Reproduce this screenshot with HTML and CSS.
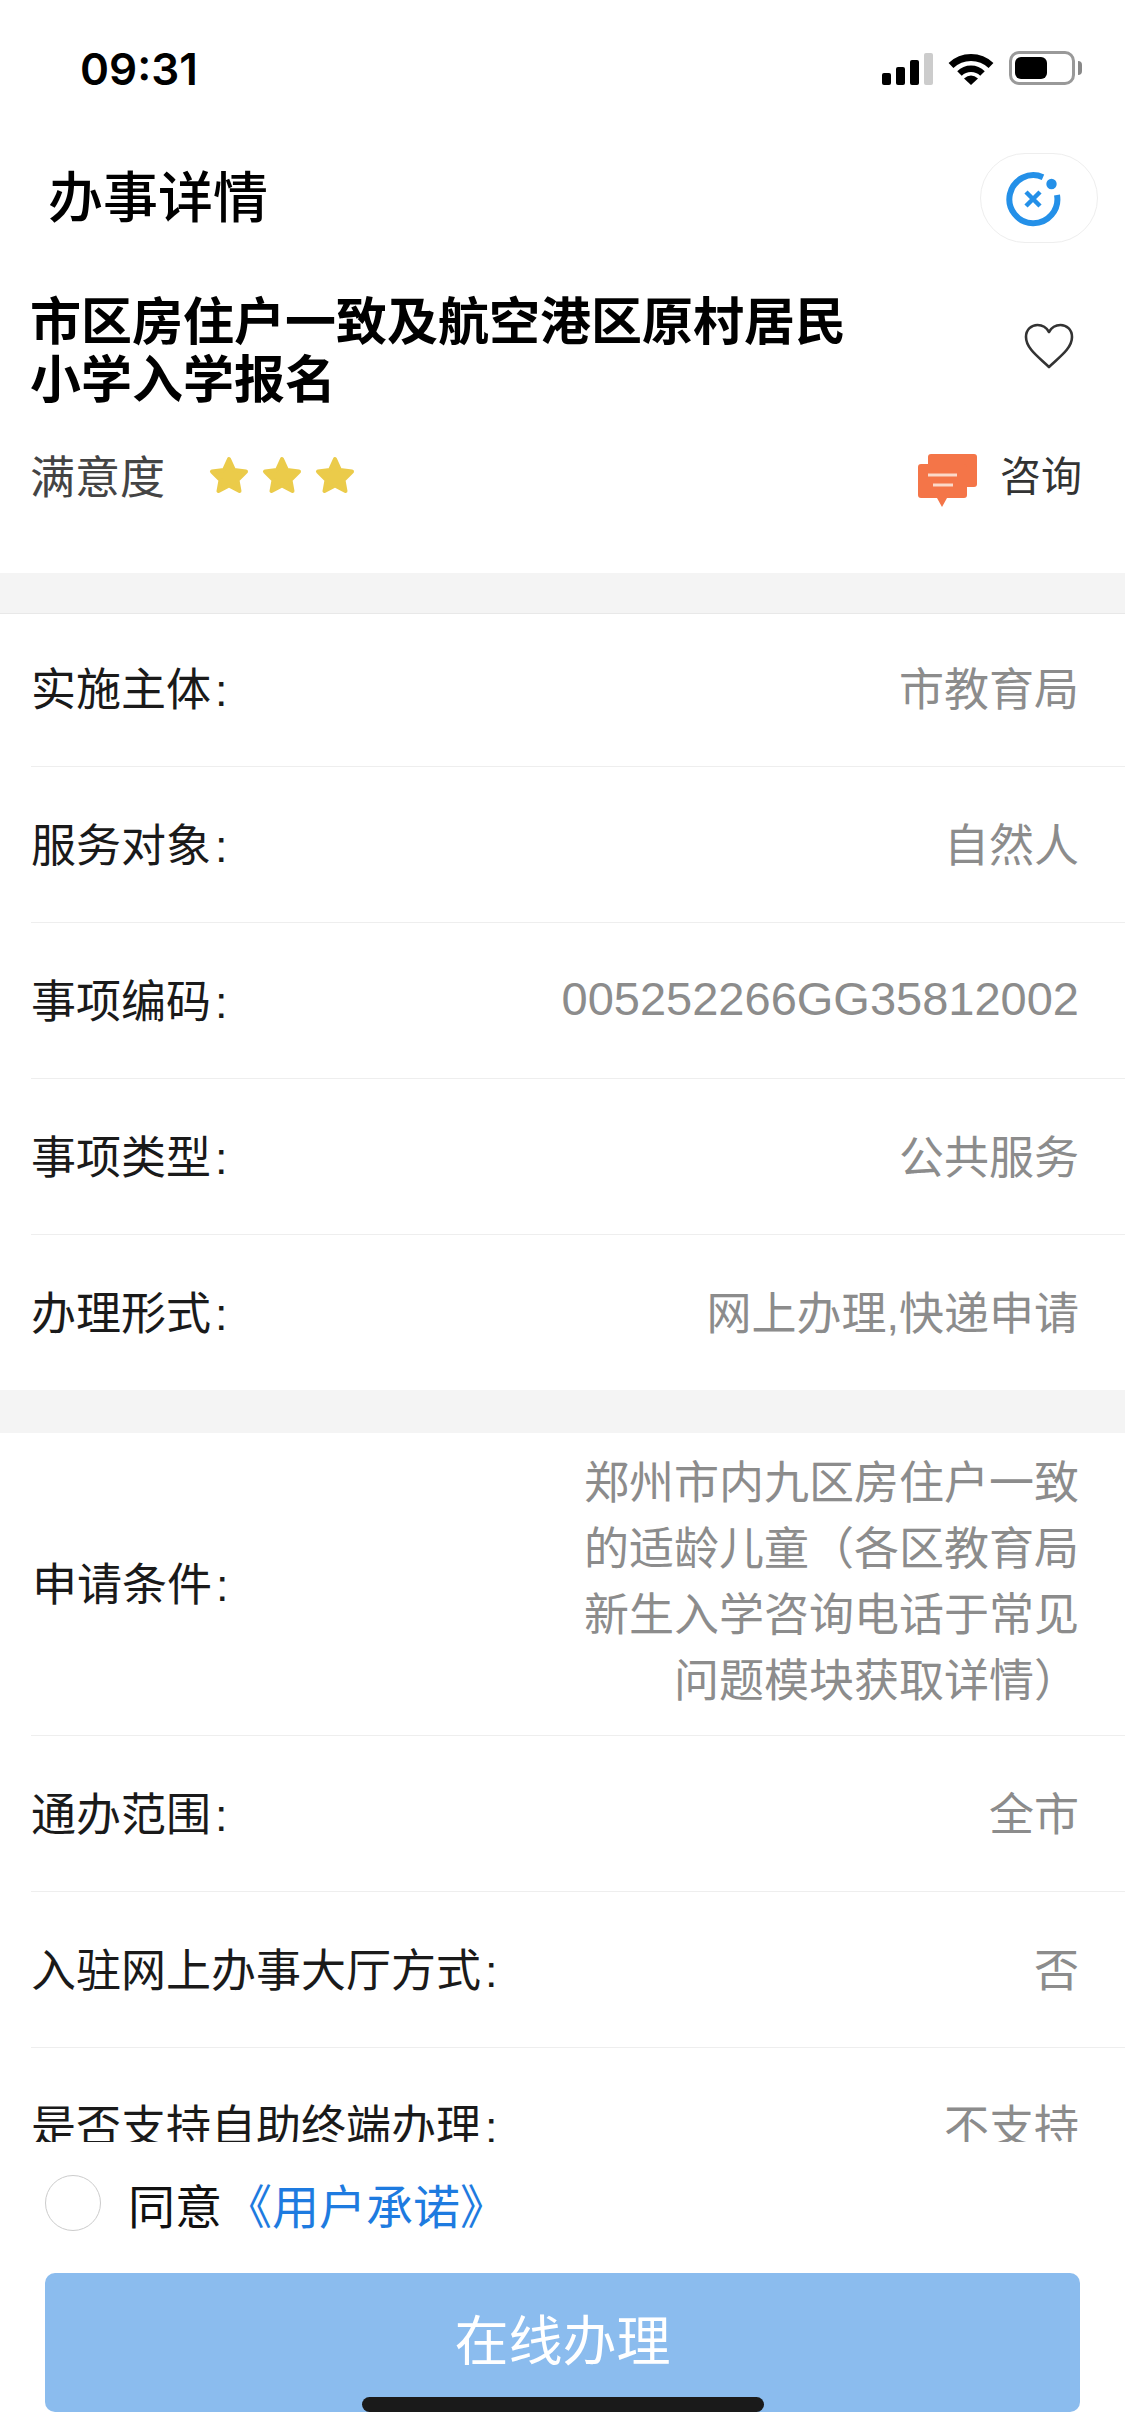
FILE: index.html
```html
<!DOCTYPE html>
<html lang="zh">
<head>
<meta charset="utf-8" />
<title>办事详情</title>
<link rel="stylesheet" href="styles.css">
</head>
<body>
<div class="page">
  <div class="status-bar">
    <span class="time">09:31</span>
    <div class="status-icons">
      <div class="signal">
        <i class="bar bar1"></i><i class="bar bar2"></i><i class="bar bar3"></i><i class="bar bar4"></i>
      </div>
      <svg class="wifi" width="46" height="33" viewBox="0 0 46 33">
        <path d="M3 13.5A29 29 0 0 1 43 13.5" fill="none" stroke="#000" stroke-width="7"/>
        <path d="M11.5 21.5A16.5 16.5 0 0 1 34.5 21.5" fill="none" stroke="#000" stroke-width="6.5"/>
        <path d="M16 26.5Q23 20.5 30 26.5L23 33Z" fill="#000"/>
      </svg>
      <div class="battery"><div class="battery-fill"></div></div>
      <div class="battery-nub"></div>
    </div>
  </div>

  <div class="nav">
    <span class="nav-title">办事详情</span>
    <div class="capsule">
      <svg class="capsule-icon" width="56" height="56" viewBox="0 0 56 56">
        <path d="M38 6.2A24 24 0 1 0 52 24" fill="none" stroke="#2490e8" stroke-width="6"/>
        <circle cx="46.5" cy="13" r="5.2" fill="#2490e8"/>
        <path d="M21 21L35 35M35 21L21 35" stroke="#2490e8" stroke-width="4.5"/>
      </svg>
    </div>
  </div>

  <div class="scroll">
    <div class="head">
      <div class="head-top">
        <h1 class="head-title">市区房住户一致及航空港区原村居民小学入学报名</h1>
        <svg class="heart" width="50" height="46" viewBox="0 0 50 46">
          <path d="M25 44C16 35 2 26 2 14C2 6.5 7.5 2 13.5 2C18.5 2 22.5 4.5 25 9C27.5 4.5 31.5 2 36.5 2C42.5 2 48 6.5 48 14C48 26 34 35 25 44Z" fill="none" stroke="#333" stroke-width="2.6" stroke-linejoin="round"/>
        </svg>
      </div>
      <div class="head-meta">
        <div class="rate">
          <span class="rate-label">满意度</span>
          <div class="stars">
            <svg width="40" height="38" viewBox="0 0 40 38"><path d="M20 3L25 14L37 15.5L28.5 24L30.5 35L20 29.5L9.5 35L11.5 24L3 15.5L15 14Z" fill="#ebcb4a" stroke="#ebcb4a" stroke-width="4" stroke-linejoin="round"/></svg>
            <svg width="40" height="38" viewBox="0 0 40 38"><path d="M20 3L25 14L37 15.5L28.5 24L30.5 35L20 29.5L9.5 35L11.5 24L3 15.5L15 14Z" fill="#ebcb4a" stroke="#ebcb4a" stroke-width="4" stroke-linejoin="round"/></svg>
            <svg width="40" height="38" viewBox="0 0 40 38"><path d="M20 3L25 14L37 15.5L28.5 24L30.5 35L20 29.5L9.5 35L11.5 24L3 15.5L15 14Z" fill="#ebcb4a" stroke="#ebcb4a" stroke-width="4" stroke-linejoin="round"/></svg>
          </div>
        </div>
        <div class="consult">
          <svg class="consult-icon" width="60" height="54" viewBox="0 0 60 54">
            <path d="M10 3Q10 0 13 0H56Q59 0 59 3V30Q59 33 56 33H10Z" fill="#f47548"/>
            <path d="M0 13Q0 10 3 10H46Q49 10 49 13V41Q49 44 46 44H29L24 53L19 44H3Q0 44 0 41Z" fill="#f47548"/>
            <path d="M10 21H39" stroke="#fbd9c9" stroke-width="3"/>
            <path d="M15 31H35" stroke="#fbd9c9" stroke-width="3"/>
          </svg>
          <span class="consult-text">咨询</span>
        </div>
      </div>
    </div>

    <div class="gap gap-first"></div>
    <div class="list">
      <div class="row row-first"><span class="row-label">实施主体<span class="colon">:</span></span><span class="row-value">市教育局</span></div>
      <div class="row"><span class="row-label">服务对象<span class="colon">:</span></span><span class="row-value">自然人</span></div>
      <div class="row"><span class="row-label">事项编码<span class="colon">:</span></span><span class="row-value row-code">005252266GG35812002</span></div>
      <div class="row"><span class="row-label">事项类型<span class="colon">:</span></span><span class="row-value">公共服务</span></div>
      <div class="row row-end"><span class="row-label">办理形式<span class="colon">:</span></span><span class="row-value">网上办理,快递申请</span></div>
    </div>
    <div class="gap"></div>
    <div class="list">
      <div class="row row-tall"><span class="row-label row-label-tall">申请条件<span class="colon">:</span></span><span class="row-value row-value-wrap">郑州市内九区房住户一致的适龄儿童（各区教育局新生入学咨询电话于常见问题模块获取详情）</span></div>
      <div class="row"><span class="row-label">通办范围<span class="colon">:</span></span><span class="row-value">全市</span></div>
      <div class="row"><span class="row-label">入驻网上办事大厅方式<span class="colon">:</span></span><span class="row-value">否</span></div>
      <div class="row"><span class="row-label">是否支持自助终端办理<span class="colon">:</span></span><span class="row-value">不支持</span></div>
    </div>
  </div>

  <div class="footer">
    <div class="agree">
      <div class="agree-check"></div>
      <span class="agree-text">同意<span class="agree-link">《用户承诺》</span></span>
    </div>
    <div class="submit">在线办理</div>
    <div class="home-bar"></div>
  </div>
</div>
</body>
</html>
```

FILE: styles.css
```css
*{margin:0; padding:0; box-sizing:border-box;}
body{
	background:#fff;
	font-family:"Liberation Sans","Noto Sans CJK SC",sans-serif;
}
.page{
	width:1125px;
	height:2436px;
	display:flex;
	flex-direction:column;
	overflow:hidden;
	background:#fff;
}
/*****************************************/
.status-bar{
	flex:none;
	height:130px;
	padding:50px 43px 0 80px;
	display:flex;
	justify-content:space-between;
	align-items:flex-start;
}
.time{
	font-family:Inter,"Liberation Sans",sans-serif;
	font-size:44px;
	line-height:38px;
	font-weight:600;
	color:#000;
}
.status-icons{
	display:flex;
	align-items:center;
	height:36px;
}
.signal{
	display:flex;
	align-items:flex-end;
	gap:5px;
	height:33px;
	margin-right:15px;
}
.bar{
	display:block;
	width:9px;
	border-radius:2px;
	background:#000;
}
.bar1{height:12px;}
.bar2{height:18px;}
.bar3{height:25px;}
.bar4{height:32px; background:#ccc;}
.wifi{margin-right:15px;}
.battery{
	width:66px;
	height:34px;
	padding:3px;
	border:3px solid #999;
	border-radius:10px;
}
.battery-fill{
	width:32px;
	height:22px;
	background:#000;
	border-radius:6px;
}
.battery-nub{
	width:4px;
	height:14px;
	margin-left:3px;
	background:#888;
	border-radius:0 4px 4px 0;
}
/*****************************************/
.nav{
	flex:none;
	height:143px;
	padding:23px 27px 0 48px;
	display:flex;
	justify-content:space-between;
	align-items:flex-start;
}
.nav-title{
	font-size:55px;
	line-height:90px;
	font-weight:500;
	color:#000;
}
.capsule{
	width:118px;
	height:90px;
	border:1px solid #eee;
	border-radius:45px;
	display:flex;
	align-items:center;
	justify-content:center;
}
.capsule-icon{margin:2px 12px 0 0;}
/*****************************************/
.scroll{
	flex:1;
	min-height:0;
	overflow:hidden;
}
.head{
	height:300px;
	padding:21px 43px 0 30px;
}
.head-top{
	display:flex;
	justify-content:space-between;
	align-items:center;
}
.head-title{
	width:830px;
	font-size:51px;
	line-height:58px;
	font-weight:700;
	color:#000;
}
.heart{margin:0 8px 12px 0;}
.head-meta{
	margin-top:32px;
	display:flex;
	justify-content:space-between;
	align-items:center;
}
.rate{
	display:flex;
	align-items:center;
}
.rate-label{
	font-size:45px;
	color:#444;
}
.stars{
	display:flex;
	gap:13px;
	margin-left:44px;
}
.consult{
	display:flex;
	align-items:center;
}
.consult-icon{margin:9px 0 -4px;}
.consult-text{
	margin:0 0 3px 22px;
	font-size:41px;
	color:#333;
}
.gap{
	height:43px;
	background:#f4f4f4;
}
.gap-first{
	height:41px;
	border-bottom:1px solid #e8e8e8;
}
/*****************************************/
.list{
	padding-left:31px;
}
.row{
	height:156px;
	padding:0 46px 4px 0;
	border-bottom:1px solid #eee;
	display:flex;
	justify-content:space-between;
	align-items:center;
}
.row-first{height:153px; padding-bottom:8px;}
.row-end{height:155px; border-bottom:none;}
.row-label{
	font-size:45px;
	color:#1a1a1a;
	white-space:nowrap;
}
.row-label-tall{margin:0 0 3px 1px;}
.colon{margin-left:4px;}
.row-value{
	font-size:45px;
	color:#8c8c8c;
	text-align:right;
}
.row-code{font-size:47px;}
.row-tall{height:303px; padding-bottom:2px;}
.row-value-wrap{
	width:496px;
	line-height:66px;
}
/*****************************************/
.footer{
	flex:none;
	height:294px;
	position:relative;
	padding:33px 45px 24px;
	background:#fff;
}
.agree{
	display:flex;
	align-items:center;
	height:56px;
}
.agree-check{
	width:56px;
	height:56px;
	border:1.5px solid #ccc;
	border-radius:50%;
}
.agree-text{
	margin-left:27px;
	font-size:47px;
	color:#111;
}
.agree-link{
	margin-left:3px;
	color:#1e7be0;
}
.submit{
	margin-top:42px;
	height:139px;
	line-height:139px;
	text-align:center;
	font-size:54px;
	color:#fff;
	background:#8bbcee;
	border-radius:10px;
}
.home-bar{
	position:absolute;
	left:362px;
	bottom:24px;
	width:402px;
	height:15px;
	background:#1a1a1a;
	border-radius:8px;
}
```
